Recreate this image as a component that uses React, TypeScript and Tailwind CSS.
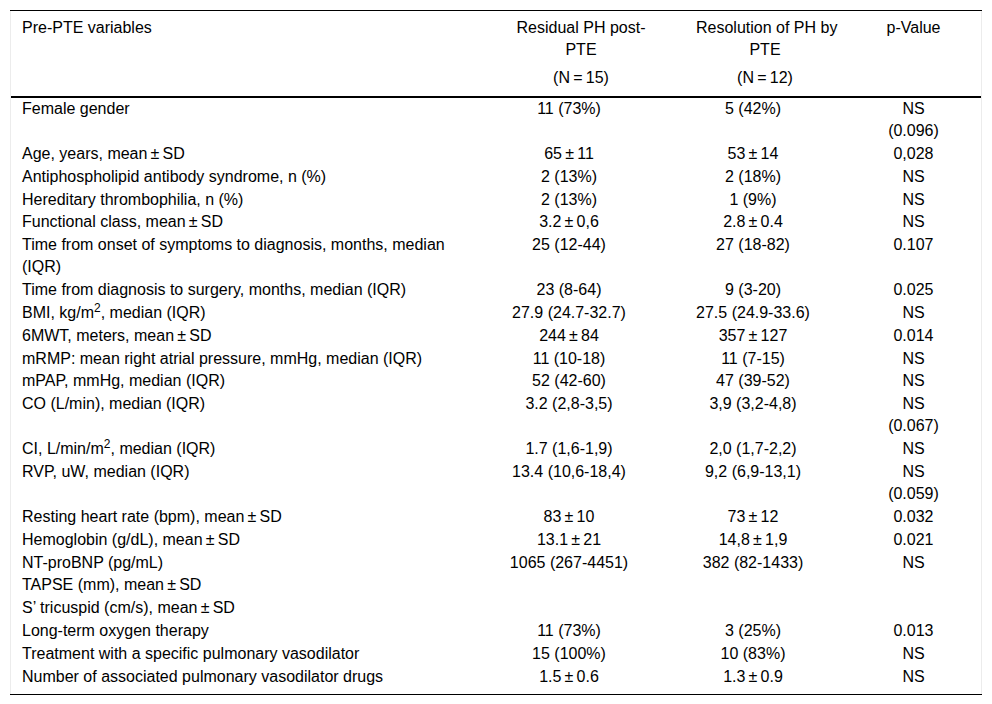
import React from 'react';

/**
 * Pre-PTE variables table
 * Residual PH vs resolution of PH after pulmonary thromboendarterectomy
 */

type Row = {
  label: React.ReactNode;
  residual?: React.ReactNode;
  resolved?: React.ReactNode;
  p?: React.ReactNode;
};

const pm = '\u2009±\u2009';

const rows: Row[] = [
  { label: 'Female gender', residual: '11 (73%)', resolved: '5 (42%)', p: <>NS<br />(0.096)</> },
  { label: `Age, years, mean${pm}SD`, residual: `65${pm}11`, resolved: `53${pm}14`, p: '0,028' },
  { label: 'Antiphospholipid antibody syndrome, n (%)', residual: '2 (13%)', resolved: '2 (18%)', p: 'NS' },
  { label: 'Hereditary thrombophilia, n (%)', residual: '2 (13%)', resolved: '1 (9%)', p: 'NS' },
  { label: `Functional class, mean${pm}SD`, residual: `3.2${pm}0,6`, resolved: `2.8${pm}0.4`, p: 'NS' },
  {
    label: <>Time from onset of symptoms to diagnosis, months, median<br />(IQR)</>,
    residual: '25 (12-44)',
    resolved: '27 (18-82)',
    p: '0.107',
  },
  { label: 'Time from diagnosis to surgery, months, median (IQR)', residual: '23 (8-64)', resolved: '9 (3-20)', p: '0.025' },
  { label: <>BMI, kg/m<sup>2</sup>, median (IQR)</>, residual: '27.9 (24.7-32.7)', resolved: '27.5 (24.9-33.6)', p: 'NS' },
  { label: `6MWT, meters, mean${pm}SD`, residual: `244${pm}84`, resolved: `357${pm}127`, p: '0.014' },
  { label: 'mRMP: mean right atrial pressure, mmHg, median (IQR)', residual: '11 (10-18)', resolved: '11 (7-15)', p: 'NS' },
  { label: 'mPAP, mmHg, median (IQR)', residual: '52 (42-60)', resolved: '47 (39-52)', p: 'NS' },
  { label: 'CO (L/min), median (IQR)', residual: '3.2 (2,8-3,5)', resolved: '3,9 (3,2-4,8)', p: <>NS<br />(0.067)</> },
  { label: <>CI, L/min/m<sup>2</sup>, median (IQR)</>, residual: '1.7 (1,6-1,9)', resolved: '2,0 (1,7-2,2)', p: 'NS' },
  { label: 'RVP, uW, median (IQR)', residual: '13.4 (10,6-18,4)', resolved: '9,2 (6,9-13,1)', p: <>NS<br />(0.059)</> },
  { label: `Resting heart rate (bpm), mean${pm}SD`, residual: `83${pm}10`, resolved: `73${pm}12`, p: '0.032' },
  { label: `Hemoglobin (g/dL), mean${pm}SD`, residual: `13.1${pm}21`, resolved: `14,8${pm}1,9`, p: '0.021' },
  { label: 'NT-proBNP (pg/mL)', residual: '1065 (267-4451)', resolved: '382 (82-1433)', p: 'NS' },
  { label: `TAPSE (mm), mean${pm}SD` },
  { label: `S\u2019 tricuspid (cm/s), mean${pm}SD` },
  { label: 'Long-term oxygen therapy', residual: '11 (73%)', resolved: '3 (25%)', p: '0.013' },
  { label: 'Treatment with a specific pulmonary vasodilator', residual: '15 (100%)', resolved: '10 (83%)', p: 'NS' },
  { label: 'Number of associated pulmonary vasodilator drugs', residual: `1.5${pm}0.6`, resolved: `1.3${pm}0.9`, p: 'NS' },
];

const cols = 'grid grid-cols-[467px_182px_186px_135px]';

export default function App() {
  return (
    <div className="min-h-[704px] bg-white pt-[10px] pl-[10px] font-['Liberation_Sans',Arial,sans-serif] text-[16px] leading-[22px] text-black">
      <div className="w-[972px] border-t border-black">
        <div className="border-x border-[#ececec] pb-[5px]">
          {/* Header */}
          <div className={`${cols} border-b-2 border-black pt-[6px] pb-[7px]`}>
            <div className="pl-[11px]">Pre-PTE variables</div>
            <div className="whitespace-nowrap pl-[36px] pr-[12px] text-center">
              <div>
                Residual PH post-
                <br />
                PTE
              </div>
              <div className="mt-[6px]">(N{'\u2009=\u2009'}15)</div>
            </div>
            <div className="whitespace-nowrap pl-[36px] pr-[12px] text-center">
              <div>
                Resolution of PH by
                <br />
                PTE
              </div>
              <div className="mt-[6px]">(N{'\u2009=\u2009'}12)</div>
            </div>
            <div className="text-center">p-Value</div>
          </div>

          {/* Body */}
          {rows.map((row, i) => (
            <div key={i} className={`${cols} pb-[0.85px]`}>
              <div className="pl-[11px]">{row.label}</div>
              <div className="text-center">{row.residual}</div>
              <div className="text-center">{row.resolved}</div>
              <div className="text-center">{row.p}</div>
            </div>
          ))}
        </div>
        <div className="h-px bg-black" />
      </div>
    </div>
  );
}
